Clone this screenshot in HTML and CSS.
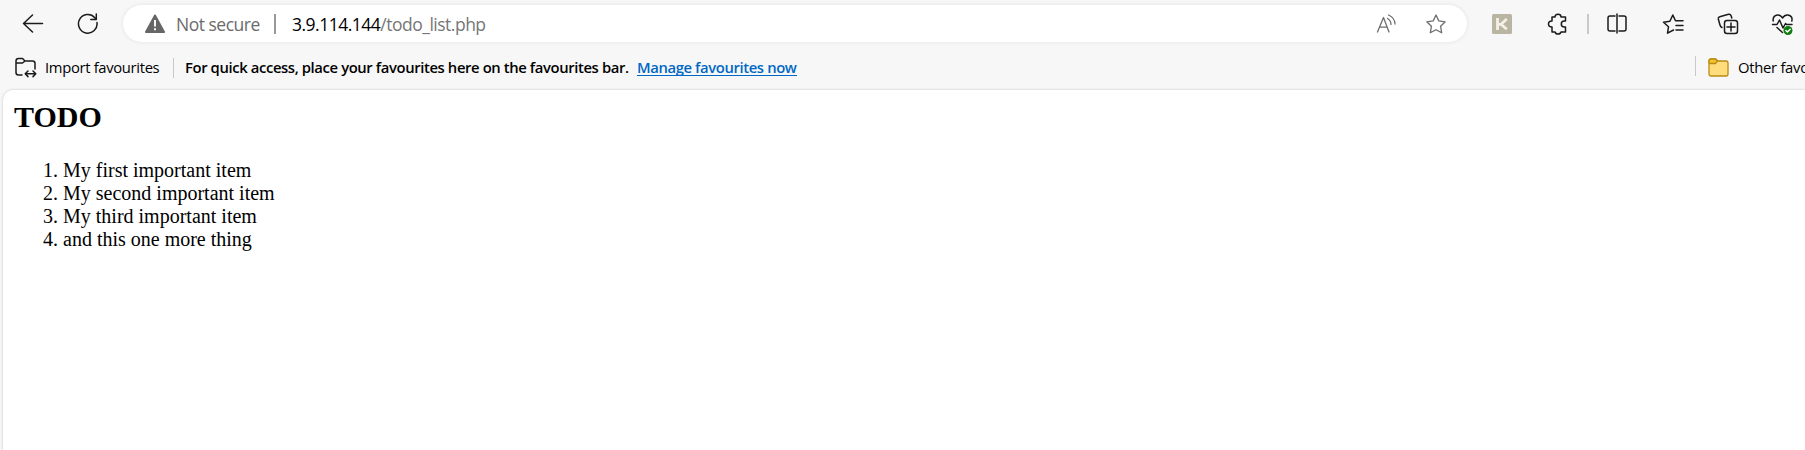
FILE: index.html
```html
<!DOCTYPE html>
<html lang="en-GB">
<head>
<meta charset="utf-8">
<title>TODO</title>
<link rel="stylesheet" href="styles.css">
</head>
<body>
<header class="chrome">
  <div class="toolbar">
    <svg class="icon back" width="22" height="22" viewBox="0 0 22 22"><path d="M20.500 10.500H1.500M10.500 2L1.500 10.500l9 8.500"/></svg>
    <svg class="icon reload" width="22" height="22" viewBox="0 0 22 22"><path d="M20 9.500A9.300 9.300 0 1 1 17.800 4.700L19 6M19.300 1v5.500h-5.500"/></svg>
    <div class="address">
      <svg class="warning" width="22" height="20" viewBox="0 0 22 20"><path d="M11 1.500L20 18H2z" fill="#666" stroke="#666" stroke-width="2" stroke-linejoin="round"/><path d="M11 6v6.500M11 14.300v2" stroke="#fff" stroke-width="1.900"/></svg>
      <span class="security">Not secure</span>
      <span class="address-divider"></span>
      <span class="url">3.9.114.144<span class="path">/todo_list.php</span></span>
      <svg class="icon grey read" width="22" height="20" viewBox="0 0 22 20"><path d="M1.500 18L7.500 3.500 13 18M3.500 13.200h7.700M11.500 4.500q3.500 2 3.500 6M12.500 1q6.500 3 6.500 9"/></svg>
      <svg class="icon grey star" width="22" height="22" viewBox="0 0 22 22"><path d="M11 2l2.800 5.900 6.400.9-4.600 4.500 1.100 6.500L11 16.700l-5.700 3.100 1.100-6.500L1.800 8.800l6.400-.9z"/></svg>
    </div>
    <div class="tools">
      <svg class="extension" width="20" height="20" viewBox="0 0 20 20"><rect width="20" height="20" rx="1.500" fill="#b9b5a2"/><path d="M5.500 4v12M14.800 5L9 10.300l5.800 5M6 10.300h3" fill="none" stroke="#f3f1e5" stroke-width="2.800"/></svg>
      <svg class="icon puzzle" width="22" height="22" viewBox="0 0 22 22"><path d="M5 4h3q0-2.700 3-2.700T14 4h4.500v4h-1.200q-3 0-3 3t3 3h1.200v5H14q-.5 2-3 2t-3-2H5v-5q-3.500 0-3.500-3T5 8z"/></svg>
      <span class="tool-divider"></span>
      <svg class="icon split" width="20" height="22" viewBox="0 0 20 22"><path d="M8 3H3Q1 3 1 5v11q0 2 2 2h5M12 3h5q2 0 2 2v11q0 2-2 2h-5M10 1v19"/></svg>
      <svg class="icon starlist" width="22" height="22" viewBox="0 0 22 22"><path d="M11.500 17l-6 3.200 1-6.400L1.500 9.200l6.400-.9L10.800 2l2.700 5.800H21M14 12.500h7M14 17h7"/></svg>
      <svg class="icon collections" width="22" height="22" viewBox="0 0 22 22"><rect x="7.500" y="7.500" width="13" height="13" rx="2.500"/><path d="M14 10v8M10 14h8M5 14.500Q3.500 14 3 12L1.300 6Q1 4.300 2.800 3.800L11.500 1.300Q13.500 1 14.200 3l.6 2"/></svg>
      <svg class="icon health" width="24" height="24" viewBox="0 0 24 24"><path d="M2.200 9Q1.500 4 6.200 3q3.500-.3 5.300 3Q13.500 2.700 17 3 22 4 20.800 9M1.500 12.500H6L8.500 8l3.500 8 2.500-4.500 1 1H21M6 15.500l5.500 5"/><circle cx="17" cy="18.500" r="4.500" fill="#107c10" stroke="none"/><path d="M14.900 18.500l1.500 1.500 2.800-2.800" stroke="#fff"/></svg>
    </div>
  </div>
  <div class="favourites">
    <svg class="icon import" width="22" height="21" viewBox="0 0 22 21"><path d="M7 18H3.500Q1 18 1 15.500V4q0-2.500 2.500-2.500h4L10 4h7.500Q20 4 20 6.500V12M1 6h6.500L10 4M10.500 16.800h10M13 14l-2.800 2.800 2.800 2.800M18 14l2.800 2.800-2.800 2.800"/></svg>
    <span class="label import-label">Import favourites</span>
    <span class="bar-divider"></span>
    <span class="label hint">For quick access, place your favourites here on the favourites bar.</span>
    <a class="manage">Manage favourites now</a>
    <div class="other">
      <span class="bar-divider raised"></span>
      <svg class="folder" width="21" height="19" viewBox="0 0 21 19"><path d="M1 3q0-2 2-2h4.500L10 3h8q2 0 2 2v11q0 2-2 2H3q-2 0-2-2z" fill="#ffdc7c" stroke="#b98b12" stroke-width="1.300"/><path d="M1 3.500Q1 1 3 1h4.500L9.300 3 7.500 5.500H2.500Q1 5.500 1 4z" fill="#f5c32c" stroke="#b98b12" stroke-width="1.300"/></svg>
      <span class="label other-label">Other favo</span>
    </div>
  </div>
</header>
<main class="page">
  <h2>TODO</h2>
  <ol>
    <li>My first important item</li>
    <li>My second important item</li>
    <li>My third important item</li>
    <li>and this one more thing</li>
  </ol>
</main>
</body>
</html>
```
FILE: styles.css
```css
body {
  margin: 0;
  width: 1805px;
  height: 450px;
  overflow: hidden;
  display: flex;
  flex-direction: column;
  background: #f7f7f7;
  font-family: "Open Sans", sans-serif;
  color: #000;
}
.chrome { height: 90px; flex: none; white-space: nowrap; }
.toolbar { display: flex; align-items: center; height: 47px; }
.icon { fill: none; stroke: #1b1b1b; stroke-width: 1.5; stroke-linecap: round; stroke-linejoin: round; }
svg { flex: none; display: block; }
.grey { stroke: #6e6e6e; stroke-width: 1.3; }
.back { margin-left: 22px; }
.reload { margin-left: 33px; }
.address {
  display: flex;
  align-items: center;
  box-sizing: border-box;
  width: 1344px;
  height: 37px;
  margin-left: 24px;
  padding-left: 21px;
  border-radius: 19px;
  background: #fff;
  box-shadow: 0 0 4px rgba(0, 0, 0, .09);
  font-size: 17.5px;
}
.security { width: 98px; margin-left: 10px; color: #6b6b6b; letter-spacing: -.5px; }
.address-divider { width: 2px; height: 20px; background: #999; }
.url { margin-left: 16px; letter-spacing: -.5px; }
.path { color: #767676; }
.read { margin-left: auto; }
.star { margin: 0 20px 0 27px; }
.tools { display: flex; align-items: center; margin-left: 25px; }
.puzzle { margin-left: 35px; }
.tool-divider { width: 2px; height: 20px; margin-left: 18px; background: #c9c9c9; }
.split { margin-left: 18px; }
.starlist { margin-left: 35px; }
.collections { margin-left: 33px; }
.health { margin-left: 32px; }
.favourites { display: flex; align-items: center; height: 41px; font-size: 14.8px; }
.label { padding-bottom: 2px; }
.import { margin-left: 15px; }
.import-label { width: 120px; margin-left: 8px; letter-spacing: -.33px; }
.bar-divider { flex: none; width: 1px; height: 20px; margin-left: 8px; background: #c8c8c8; }
.hint { width: 444px; margin-left: 11px; font-weight: 600; letter-spacing: -.38px; }
.manage { margin-left: 8px; color: #0067c5; font-weight: 600; letter-spacing: -.38px; line-height: 16px; border-bottom: 1px solid #0067c5; }
.other { display: flex; align-items: center; width: 110px; margin-left: auto; }
.raised { margin: 0 0 4px; }
.folder { margin-left: 12px; }
.other-label { margin-left: 9px; letter-spacing: -.28px; }
.page {
  flex: 1;
  margin-left: 3px;
  padding: 10px 10px 10px 11px;
  border-radius: 10px 0 0;
  background: #fff;
  box-shadow: 0 0 3px rgba(0, 0, 0, .2);
  font: 20px/23px "Liberation Serif", serif;
}
.page h2 { margin: 0; font-size: 30px; line-height: 34px; }
.page ol { margin: 25px 0 0; padding-left: 49px; }
```
